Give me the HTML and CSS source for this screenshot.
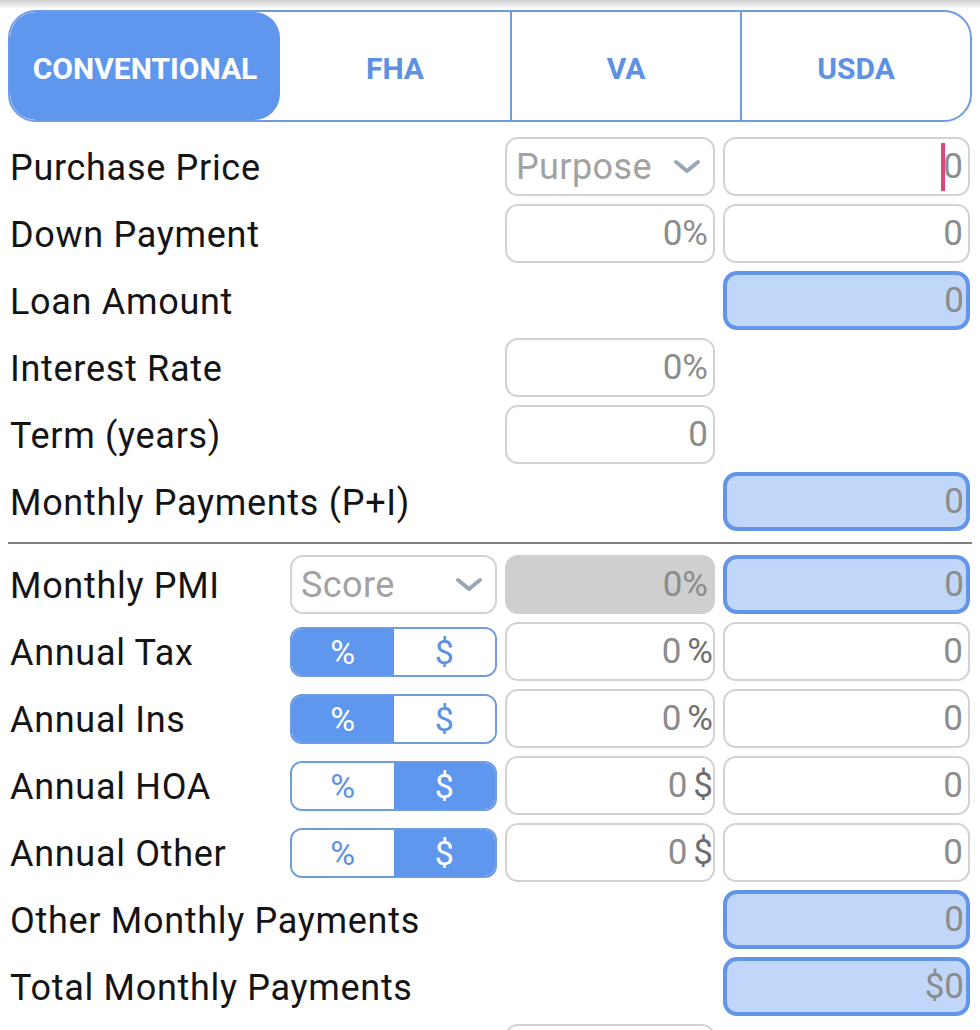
FILE: index.html
```html
<!DOCTYPE html>
<html>
<head>
<meta charset="utf-8">
<link rel="stylesheet" href="styles.css">
</head>
<body>
<div class="shade"></div>
<nav class="tabs">
  <div class="tab active">CONVENTIONAL</div>
  <div class="tab">FHA</div>
  <div class="tab">VA</div>
  <div class="tab">USDA</div>
</nav>

<section class="grid">
  <div class="label">Purchase Price</div>
  <div class="field select colb"><span class="ph">Purpose</span><svg class="chev" width="28" height="16" viewBox="0 0 28 16"><polyline points="3,3 14,12 25,3" fill="none" stroke="#9ca6b3" stroke-width="4" stroke-linecap="round" stroke-linejoin="round"/></svg></div>
  <div class="field colc"><span class="caret"></span>0</div>

  <div class="label">Down Payment</div>
  <div class="field colb">0%</div>
  <div class="field colc">0</div>

  <div class="label wide">Loan Amount</div>
  <div class="field calc colc">0</div>

  <div class="label">Interest Rate</div>
  <div class="field colb">0%</div>

  <div class="label">Term (years)</div>
  <div class="field colb">0</div>

  <div class="label wide">Monthly Payments (P+I)</div>
  <div class="field calc colc">0</div>
</section>

<hr class="sep">

<section class="grid">
  <div class="label">Monthly PMI</div>
  <div class="field select cola"><span class="ph">Score</span><svg class="chev" width="28" height="16" viewBox="0 0 28 16"><polyline points="3,3 14,12 25,3" fill="none" stroke="#9ca6b3" stroke-width="4" stroke-linecap="round" stroke-linejoin="round"/></svg></div>
  <div class="field disabled colb">0%</div>
  <div class="field calc colc">0</div>

  <div class="label">Annual Tax</div>
  <div class="toggle cola"><span class="opt on">%</span><span class="opt">$</span></div>
  <div class="field suffix colb">0<span class="unit">%</span></div>
  <div class="field colc">0</div>

  <div class="label">Annual Ins</div>
  <div class="toggle cola"><span class="opt on">%</span><span class="opt">$</span></div>
  <div class="field suffix colb">0<span class="unit">%</span></div>
  <div class="field colc">0</div>

  <div class="label">Annual HOA</div>
  <div class="toggle cola"><span class="opt">%</span><span class="opt on">$</span></div>
  <div class="field suffix colb">0<span class="unit">$</span></div>
  <div class="field colc">0</div>

  <div class="label">Annual Other</div>
  <div class="toggle cola"><span class="opt">%</span><span class="opt on">$</span></div>
  <div class="field suffix colb">0<span class="unit">$</span></div>
  <div class="field colc">0</div>

  <div class="label wide">Other Monthly Payments</div>
  <div class="field calc colc">0</div>

  <div class="label wide">Total Monthly Payments</div>
  <div class="field calc colc">$0</div>

  <div class="label"></div>
  <div class="field colb"></div>
</section>
</body>
</html>
```

FILE: styles.css
```css
html, body {
  margin: 0;
  padding: 0;
  background: #ffffff;
  font-family: Roboto, "Noto Sans", sans-serif;
  overflow: hidden;
}

.shade {
  height: 9px;
  background: linear-gradient(#cfcfcf, #ffffff);
}

.tabs {
  display: grid;
  grid-template-columns: 270px 1fr 1fr 1fr;
  margin: 1px 8px 0 8px;
  height: 112px;
  border: 2px solid #6e9be2;
  border-radius: 28px;
  box-sizing: border-box;
  overflow: hidden;
}

.tab {
  display: flex;
  align-items: center;
  justify-content: center;
  font-weight: 700;
  font-size: 30px;
  padding-top: 4px;
  color: #5d91e3;
  border-left: 2px solid #6e9be2;
}

.tab.active {
  background: #5f97ef;
  color: #ffffff;
  border-left: none;
  border-radius: 26px;
}

.tab.active + .tab {
  border-left: none;
}

.grid {
  display: grid;
  grid-template-columns: 272px 207px 210px 247px;
  column-gap: 8px;
  row-gap: 8px;
  grid-auto-rows: 59px;
  padding: 0 10px;
  align-items: center;
}

.tabs + .grid {
  margin-top: 15px;
}

.label {
  grid-column: 1;
  font-size: 36px;
  color: #141414;
  white-space: nowrap;
  letter-spacing: 0.7px;
  padding-top: 2px;
}

.label.wide {
  grid-column: 1 / span 3;
}

.cola { grid-column: 2; }
.colb { grid-column: 3; }
.colc { grid-column: 4; }

.field {
  height: 59px;
  box-sizing: border-box;
  border: 2px solid #d2d2d2;
  border-radius: 13px;
  display: flex;
  align-items: center;
  justify-content: flex-end;
  padding: 0 5px;
  font-size: 35px;
  color: #8c8c8c;
  background: #fff;
}

.field.calc {
  background: #c1d7f9;
  border: 4px solid #6396e8;
  border-radius: 14px;
  padding-right: 2px;
}

.field.disabled {
  background: #cfcfcf;
  border-color: #cfcfcf;
}

.field.suffix {
  padding-right: 0;
}

.unit {
  color: #6e6e6e;
  margin-left: 6px;
}

.field.select {
  justify-content: space-between;
  padding: 0 12px 0 9px;
}

.ph {
  color: #a2a2a2;
  font-size: 36px;
  letter-spacing: 0.4px;
}

.chev {
  display: block;
}

.caret {
  display: inline-block;
  width: 4px;
  height: 48px;
  background: #e0457a;
  margin-right: -2px;
}

.toggle {
  display: grid;
  grid-template-columns: 1fr 1fr;
  height: 50px;
  box-sizing: border-box;
  border: 2px solid #6e9be2;
  border-radius: 12px;
  overflow: hidden;
}

.opt {
  display: flex;
  align-items: center;
  justify-content: center;
  font-size: 34px;
  color: #5d91e3;
  background: #fff;
}

.opt.on {
  background: #5f97ef;
  color: #ffffff;
}

.sep {
  margin: 11px 8px 11px 8px;
  border: none;
  border-top: 2px solid #808080;
  height: 0;
}
```
